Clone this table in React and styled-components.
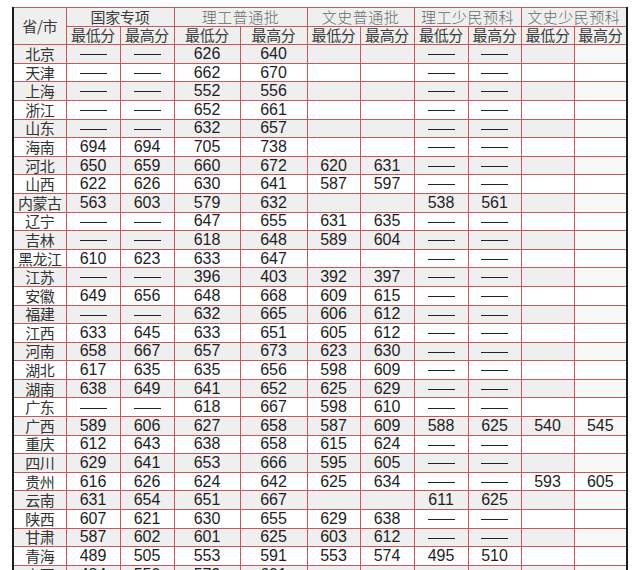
import React from "react";
import styled, { createGlobalStyle } from "styled-components";

const GlobalStyle = createGlobalStyle`
  html, body { margin: 0; padding: 0; background: #ffffff; }
  body { font-family: "Liberation Sans", "Noto Sans CJK SC", sans-serif; }
`;

const Page = styled.div`
  padding: 7px 0 0 12px;
  width: 640px;
  height: 570px;
  box-sizing: border-box;
  overflow: hidden;
`;

const Table = styled.table`
  border-collapse: collapse;
  table-layout: fixed;
  width: 615px;
  border-top: 1px solid #3a3a3a;
  border-left: 2px solid #1a1a1a;
  border-right: 2px solid #1a1a1a;
`;

const Row = styled.tr`
  height: 18.6px;
  background: ${(p) => (p.$shade ? "#efefef" : "#ffffff")};
`;

const Cell = styled.td`
  padding: 0;
  border: 1px solid #c8585c;
  text-align: center;
  vertical-align: middle;
  line-height: 1;
  white-space: nowrap;
  color: #1e1e1e;
  font-size: 16px;
  font-family: "Liberation Sans", "Noto Sans CJK SC", sans-serif;
  &:last-child {
    background: ${(p) => (p.$shade ? "#f8f8f8" : "transparent")};
  }
`;

const CjkText = styled.div`
  height: 15px;
  line-height: 15px;
  padding-bottom: 1px;
`;

const NameCell = styled(Cell)`
  font-family: "Noto Sans CJK SC", sans-serif;
  font-size: 15px;
  color: #333;
  letter-spacing: -0.5px;
`;

const HeadCell = styled(Cell)`
  background: #efefef;
  font-family: "Noto Sans CJK SC", sans-serif;
  font-size: 15px;
  color: ${(p) => (p.$light ? "#6a6a6a" : "#3a3a3a")};
  font-weight: ${(p) => (p.$light ? 300 : 400)};
  letter-spacing: ${(p) => (p.$light ? "0.5px" : "-0.3px")};
  &:last-child {
    background: #efefef;
  }
`;

const Dash = styled.span`
  display: inline-block;
  width: 27px;
  height: 1px;
  background: #222;
  vertical-align: middle;
`;

const widths = [53, 54, 54, 66, 67, 53, 54, 54, 53, 53, 53];

const D = "-";
const rows = [
  ["北京", D, D, "626", "640", "", "", D, D, "", ""],
  ["天津", D, D, "662", "670", "", "", D, D, "", ""],
  ["上海", D, D, "552", "556", "", "", D, D, "", ""],
  ["浙江", D, D, "652", "661", "", "", D, D, "", ""],
  ["山东", D, D, "632", "657", "", "", D, D, "", ""],
  ["海南", "694", "694", "705", "738", "", "", D, D, "", ""],
  ["河北", "650", "659", "660", "672", "620", "631", D, D, "", ""],
  ["山西", "622", "626", "630", "641", "587", "597", D, D, "", ""],
  ["内蒙古", "563", "603", "579", "632", "", "", "538", "561", "", ""],
  ["辽宁", D, D, "647", "655", "631", "635", D, D, "", ""],
  ["吉林", D, D, "618", "648", "589", "604", D, D, "", ""],
  ["黑龙江", "610", "623", "633", "647", "", "", D, D, "", ""],
  ["江苏", D, D, "396", "403", "392", "397", D, D, "", ""],
  ["安徽", "649", "656", "648", "668", "609", "615", D, D, "", ""],
  ["福建", D, D, "632", "665", "606", "612", D, D, "", ""],
  ["江西", "633", "645", "633", "651", "605", "612", D, D, "", ""],
  ["河南", "658", "667", "657", "673", "623", "630", D, D, "", ""],
  ["湖北", "617", "635", "635", "656", "598", "609", D, D, "", ""],
  ["湖南", "638", "649", "641", "652", "625", "629", D, D, "", ""],
  ["广东", D, D, "618", "667", "598", "610", D, D, "", ""],
  ["广西", "589", "606", "627", "658", "587", "609", "588", "625", "540", "545"],
  ["重庆", "612", "643", "638", "658", "615", "624", D, D, "", ""],
  ["四川", "629", "641", "653", "666", "595", "605", D, D, "", ""],
  ["贵州", "616", "626", "624", "642", "625", "634", D, D, "593", "605"],
  ["云南", "631", "654", "651", "667", "", "", "611", "625", "", ""],
  ["陕西", "607", "621", "630", "655", "629", "638", D, D, "", ""],
  ["甘肃", "587", "602", "601", "625", "603", "612", D, D, "", ""],
  ["青海", "489", "505", "553", "591", "553", "574", "495", "510", "", ""],
  ["宁夏", "484", "550", "579", "601", "", "", D, D, "", ""],
];

const groups = [
  { label: "国家专项", light: false },
  { label: "理工普通批", light: true },
  { label: "文史普通批", light: true },
  { label: "理工少民预科", light: true },
  { label: "文史少民预科", light: true },
];

export default function App() {
  return (
    <Page>
      <GlobalStyle />
      <Table>
        <colgroup>
          {widths.map((w, i) => (
            <col key={i} style={{ width: w }} />
          ))}
        </colgroup>
        <thead>
          <Row>
            <HeadCell rowSpan={2}>
              <CjkText>省/市</CjkText>
            </HeadCell>
            {groups.map((g) => (
              <HeadCell key={g.label} colSpan={2} $light={g.light}>
                <CjkText>{g.label}</CjkText>
              </HeadCell>
            ))}
          </Row>
          <Row>
            {groups.map((g) => (
              <React.Fragment key={g.label}>
                <HeadCell>
                  <CjkText>最低分</CjkText>
                </HeadCell>
                <HeadCell>
                  <CjkText>最高分</CjkText>
                </HeadCell>
              </React.Fragment>
            ))}
          </Row>
        </thead>
        <tbody>
          {rows.map((r, i) => (
            <Row key={r[0]} $shade={i % 2 === 0}>
              <NameCell>
                <CjkText>{r[0]}</CjkText>
              </NameCell>
              {r.slice(1).map((v, j) => (
                <Cell key={j} $shade={i % 2 === 0}>
                  {v === D ? <Dash /> : v}
                </Cell>
              ))}
            </Row>
          ))}
        </tbody>
      </Table>
    </Page>
  );
}
